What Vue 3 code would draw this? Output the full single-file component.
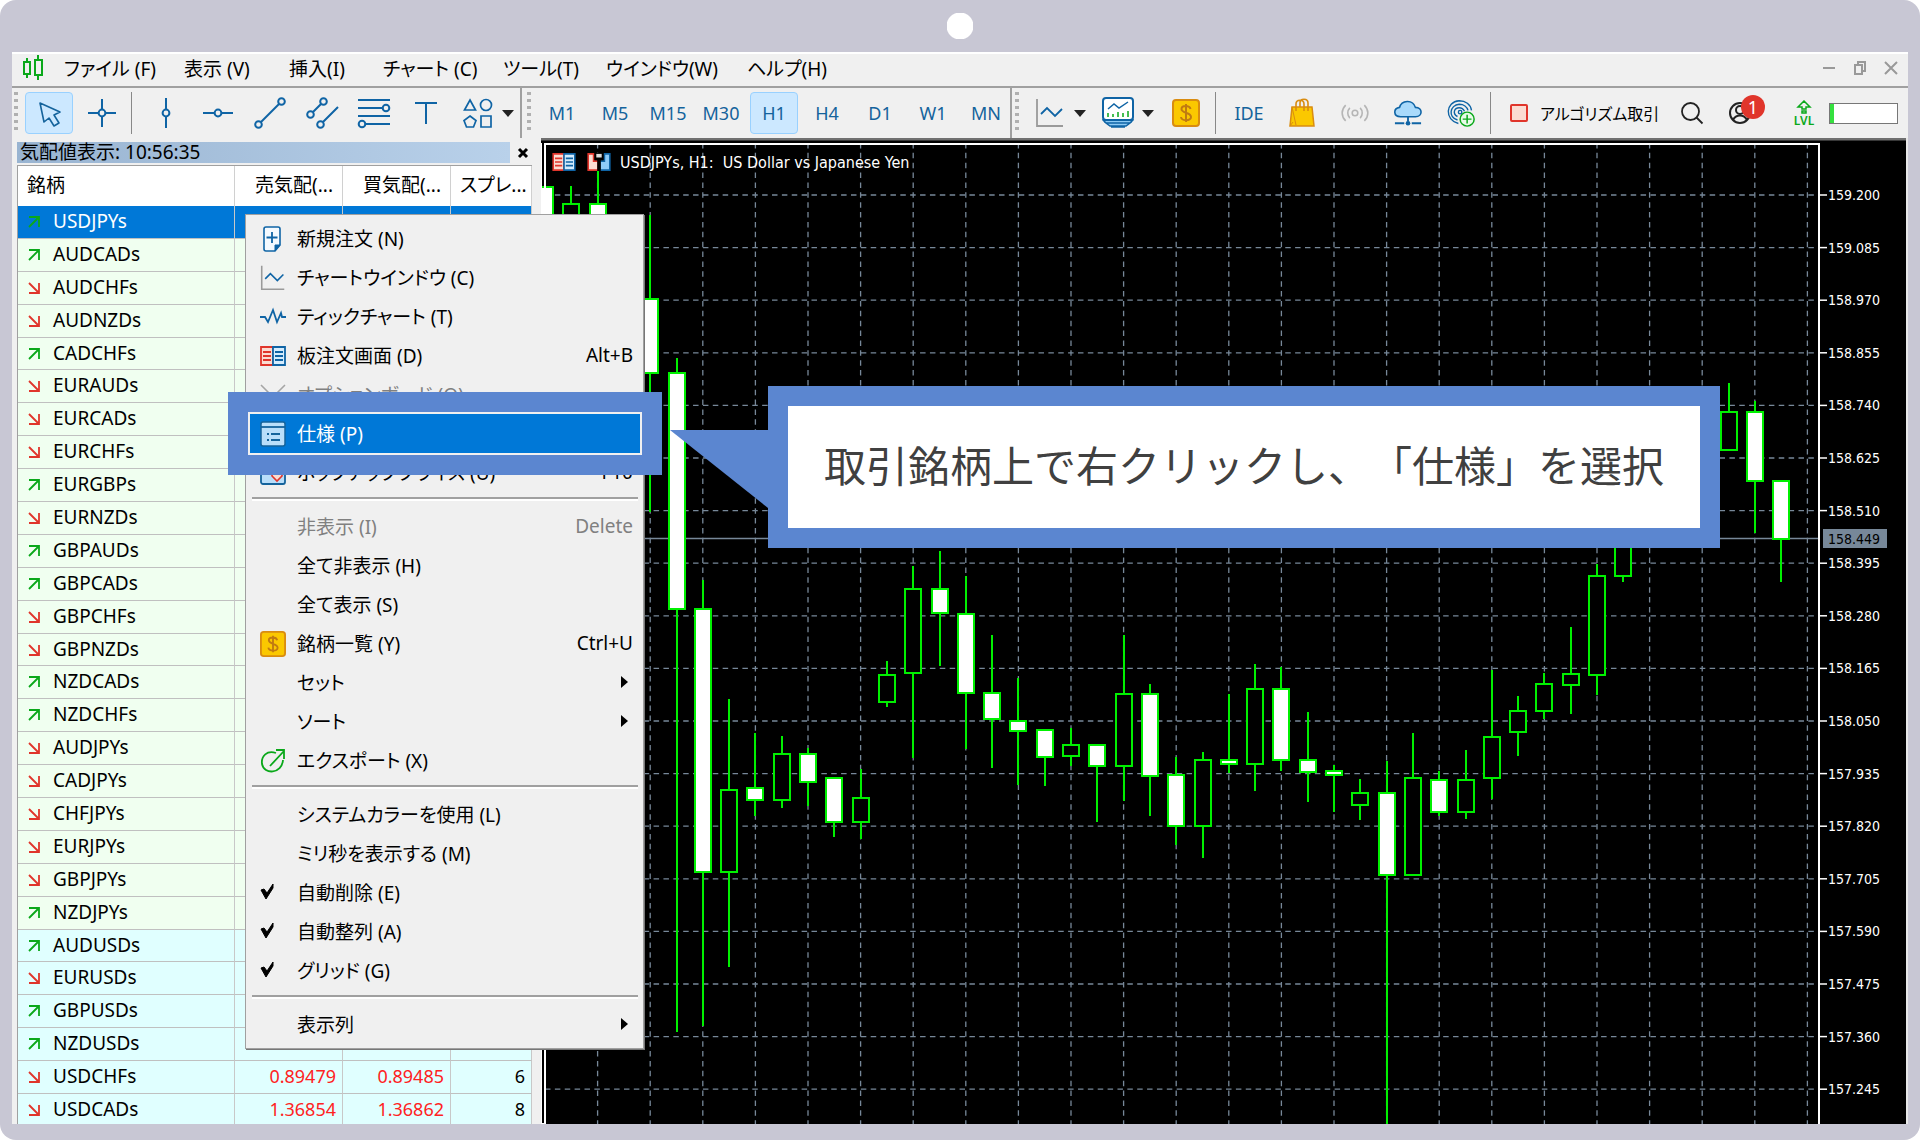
<script setup>
const menus = [
  { label: 'ファイル (F)', width: 120 },
  { label: '表示 (V)', width: 105 },
  { label: '挿入(I)', width: 94 },
  { label: 'チャート (C)', width: 120 },
  { label: 'ツール(T)', width: 103 },
  { label: 'ウインドウ(W)', width: 141 },
  { label: 'ヘルプ(H)', width: 110 }
]

const drawTools = [
  { icon: 'vline', label: '垂直線' },
  { icon: 'hline', label: '水平線' },
  { icon: 'trend', label: 'トレンドライン' },
  { icon: 'channel', label: 'チャネル' },
  { icon: 'fibo', label: 'フィボナッチ' },
  { icon: 'text', label: 'テキスト' },
  { icon: 'shapes', label: '図形' }
]

const frames = ['M1', 'M5', 'M15', 'M30', 'H1', 'H4', 'D1', 'W1', 'MN']

const services = [
  { icon: 'bag', label: 'マーケット' },
  { icon: 'signal', label: 'シグナル' },
  { icon: 'cloud', label: 'VPS' },
  { icon: 'radar', label: 'コピー' }
]

const symbols = [
  ['USDJPYs', 1], ['AUDCADs', 1], ['AUDCHFs', 0], ['AUDNZDs', 0], ['CADCHFs', 1], ['EURAUDs', 0],
  ['EURCADs', 0], ['EURCHFs', 0], ['EURGBPs', 1], ['EURNZDs', 0], ['GBPAUDs', 1], ['GBPCADs', 1],
  ['GBPCHFs', 0], ['GBPNZDs', 0], ['NZDCADs', 1], ['NZDCHFs', 1], ['AUDJPYs', 0], ['CADJPYs', 0],
  ['CHFJPYs', 0], ['EURJPYs', 0], ['GBPJPYs', 0], ['NZDJPYs', 1],
  ['AUDUSDs', 1], ['EURUSDs', 0], ['GBPUSDs', 1],
  ['NZDUSDs', 1, '0.56606', '0.56614', '8'],
  ['USDCHFs', 0, '0.89479', '0.89485', '6'],
  ['USDCADs', 0, '1.36854', '1.36862', '8']
]

const rowClass = (i, up) => ({ selected: i === 0, cyan: i > 21, up: up === 1, down: up === 0 })

const menuItems = [
  { label: '新規注文 (N)', icon: 'order' },
  { label: 'チャートウインドウ (C)', icon: 'chart' },
  { label: 'ティックチャート (T)', icon: 'tick' },
  { label: '板注文画面 (D)', icon: 'depth', key: 'Alt+B' },
  { label: 'オプションボード (O)', icon: 'option', disabled: true },
  { label: '仕様 (P)', icon: 'spec', active: true },
  { label: 'ポップアッププライス (U)', icon: 'popup', key: 'F10' },
  { sep: true },
  { label: '非表示 (I)', key: 'Delete', disabled: true },
  { label: '全て非表示 (H)' },
  { label: '全て表示 (S)' },
  { label: '銘柄一覧 (Y)', icon: 'dollar', key: 'Ctrl+U' },
  { label: 'セット', sub: true },
  { label: 'ソート', sub: true },
  { label: 'エクスポート (X)', icon: 'export' },
  { sep: true },
  { label: 'システムカラーを使用 (L)' },
  { label: 'ミリ秒を表示する (M)' },
  { label: '自動削除 (E)', icon: 'check' },
  { label: '自動整列 (A)', icon: 'check' },
  { label: 'グリッド (G)', icon: 'check' },
  { sep: true },
  { label: '表示列', sub: true }
]

/* chart geometry: grid step, and candles as [slot, filled, high, top, bottom, low] */
const STEP = 52.6
const gridX = Array.from({ length: 24 }, (_, i) => 597.6 + STEP * i)
const levels = Array.from({ length: 18 }, (_, i) => ({
  y: 195 + STEP * i,
  price: (159.2 - 0.115 * i).toFixed(3)
}))

const candles = [
  [-2, 1, 187, 187, 260, 260], [-1, 0, 186, 204, 260, 260], [0, 1, 164, 204, 260, 260],
  [2, 1, 215, 299, 373, 512], [3, 1, 358, 373, 609, 1032], [4, 1, 580, 609, 872, 1026],
  [5, 0, 699, 790, 872, 967], [6, 1, 733, 788, 800, 816], [7, 0, 736, 754, 800, 808],
  [8, 1, 748, 754, 782, 806], [9, 1, 778, 778, 822, 837], [10, 0, 769, 798, 822, 839],
  [11, 0, 661, 675, 702, 707], [12, 0, 566, 589, 673, 758], [13, 1, 551, 589, 613, 666],
  [14, 1, 576, 614, 693, 749], [15, 1, 635, 693, 719, 768], [16, 1, 678, 721, 731, 785],
  [17, 1, 730, 730, 757, 786], [18, 0, 728, 745, 756, 766], [19, 1, 745, 745, 766, 822],
  [20, 0, 635, 694, 766, 801], [21, 1, 684, 694, 776, 816], [22, 1, 757, 775, 826, 845],
  [23, 0, 752, 760, 826, 858], [24, 1, 694, 760, 764, 773], [25, 0, 664, 689, 764, 791],
  [26, 1, 667, 689, 760, 771], [27, 1, 712, 760, 772, 802], [28, 1, 765, 771, 775, 812],
  [29, 0, 779, 793, 805, 820], [30, 1, 761, 793, 875, 1130], [31, 0, 733, 778, 875, 875],
  [32, 1, 771, 780, 812, 816], [33, 0, 750, 780, 812, 819], [34, 0, 670, 737, 778, 799],
  [35, 0, 696, 711, 732, 756], [36, 0, 673, 684, 711, 719], [37, 0, 627, 674, 685, 714],
  [38, 0, 564, 576, 675, 695], [39, 0, 500, 500, 576, 582], [43, 0, 383, 412, 450, 450],
  [44, 1, 401, 412, 481, 533], [45, 1, 481, 481, 539, 582]
].map(([slot, filled, high, top, bottom, low]) => ({
  x: Math.round(597.6 + 26.3 * slot), filled, high, top, bottom, low
}))
</script>

<template>
  <svg class="sprite" aria-hidden="true">
    <symbol id="logo" viewBox="0 0 22 26">
      <g fill="none" stroke="#0aa81a" stroke-width="2"><path d="M5 3v4M5 19v4M16 0v5M16 20v5" /><path d="M2 7h6v12H2zM13 5h7v15h-7z" /></g>
    </symbol>
    <symbol id="pointer" viewBox="0 0 40 40">
      <path d="M11 10l4 19 5-4 5 8 5-3-5-8 6-3z" fill="none" stroke="#14639c" stroke-width="1.6" stroke-linejoin="round" />
    </symbol>
    <symbol id="cross" viewBox="0 0 40 40">
      <g fill="none" stroke="#0f64a5" stroke-width="2"><path d="M20 6v10M20 24v10M6 20h10M24 20h10" /><circle cx="20" cy="20" r="3.4" /></g>
    </symbol>
    <symbol id="vline" viewBox="0 0 40 40">
      <g fill="none" stroke="#0f64a5" stroke-width="2"><path d="M20 5v11M20 24v11" /><circle cx="20" cy="20" r="3.4" /></g>
    </symbol>
    <symbol id="hline" viewBox="0 0 40 40">
      <g fill="none" stroke="#0f64a5" stroke-width="2"><path d="M5 20h11M24 20h11" /><circle cx="20" cy="20" r="3.4" /></g>
    </symbol>
    <symbol id="trend" viewBox="0 0 40 40">
      <g fill="none" stroke="#0f64a5" stroke-width="2"><path d="M11 29L29 11" /><circle cx="8.500" cy="31.500" r="3.3" /><circle cx="31.500" cy="8.500" r="3.3" /></g>
    </symbol>
    <symbol id="channel" viewBox="0 0 40 40">
      <g fill="none" stroke="#0f64a5" stroke-width="2"><path d="M11 19l8-8M21 29l15-15" /><circle cx="8.500" cy="21.500" r="3.3" /><circle cx="21.500" cy="8.500" r="3.3" /><circle cx="18.500" cy="31.500" r="3.3" /></g>
    </symbol>
    <symbol id="fibo" viewBox="0 0 40 40">
      <g fill="none" stroke="#0f64a5" stroke-width="2"><path d="M4 7h32M4 15h24M4 23h32M12 31h24" /><circle cx="32" cy="15" r="3.3" /><circle cx="8" cy="31" r="3.3" /></g>
    </symbol>
    <symbol id="text" viewBox="0 0 40 40">
      <path d="M9 10h22M20 10v21" fill="none" stroke="#0f64a5" stroke-width="2" />
    </symbol>
    <symbol id="shapes" viewBox="0 0 40 40">
      <g fill="none" stroke="#0f64a5" stroke-width="1.700"><path d="M12 7l5.500 10h-11z" /><circle cx="28" cy="12" r="5.500" /><path d="M12 23l6 4.500-2.500 6.500h-7L6 27.500z" /><path d="M23 23h10v11H23z" /></g>
    </symbol>
    <symbol id="caret" viewBox="0 0 12 8"><path d="M0 1h12L6 8z" fill="#222" /></symbol>
    <symbol id="chart" viewBox="0 0 28 30">
      <path d="M1 1v27h26" fill="none" stroke="#9a9a9a" stroke-width="1.800" /><path d="M5 16l6-6 8 8 7-7" fill="none" stroke="#0f64a5" stroke-width="1.800" />
    </symbol>
    <symbol id="indicator" viewBox="0 0 32 32">
      <path d="M1 23h30l-3 3H4zM4 26h24l-4 3H8zM9 30h14" fill="#8dcbf5" stroke="#0f64a5" stroke-width="1.500" />
      <rect x="1" y="1" width="30" height="22" rx="3" fill="#fff" stroke="#0f64a5" stroke-width="2" />
      <path d="M6 12l6-5 5 4 9-6" fill="none" stroke="#0f64a5" stroke-width="1.500" /><path d="M6 20v-4M11 20v-3M16 20v-5M21 20v-4M26 20v-6" stroke="#0aa81a" stroke-width="1.500" />
    </symbol>
    <symbol id="dollar" viewBox="0 0 28 28">
      <rect x="1" y="1" width="26" height="26" rx="3" fill="#fbc800" stroke="#d98c10" stroke-width="2" />
      <path d="M18.500 10c-1-4-9-4-9 0 0 4.500 9.500 3 9.500 8 0 4.500-9.500 4-10 0M14 5v18" fill="none" stroke="#c07a12" stroke-width="2" />
    </symbol>
    <symbol id="bag" viewBox="0 0 28 30">
      <path d="M4 9h20l2 19H2z" fill="#fbc800" stroke="#d98c10" stroke-width="1.500" /><path d="M4 9l4 18M2 28l3-4" stroke="#d98c10" fill="none" />
      <path d="M8 13V6c0-5 8-5 8 0v7M12 9V5c0-5 8-5 8 0v8" fill="none" stroke="#d98c10" stroke-width="1.600" />
    </symbol>
    <symbol id="signal" viewBox="0 0 30 30">
      <g fill="none" stroke="#b5b5b5" stroke-width="1.700"><circle cx="15" cy="15" r="3" /><path d="M9.500 9.500c-3 3-3 8 0 11M20.500 9.500c3 3 3 8 0 11M5 6.500c-5 5-5 12 0 17M25 6.500c5 5 5 12 0 17" /></g>
    </symbol>
    <symbol id="cloud" viewBox="0 0 30 30">
      <path d="M7 19c-8 0-8-9-1-10C8 1 20 0 23 9c8 0 8 10 0 10z" fill="#a9dafb" stroke="#0f64a5" stroke-width="1.700" />
      <path d="M15 19v5M1 26h10M19 26h10" stroke="#0f64a5" stroke-width="2" /><circle cx="15" cy="26" r="2.500" fill="#0f64a5" />
    </symbol>
    <symbol id="radar" viewBox="0 0 32 32">
      <g fill="none" stroke="#0f64a5" stroke-width="1.600"><circle cx="15" cy="15" r="2" /><path d="M13 28C-3 24-2 3 14 2c7 0 13 4 14 11" /><path d="M12 24C1 21 3 7 14 6c5 0 9 3 10 7" /><path d="M12 20c-6-3-4-10 2-10 3 0 5 2 6 4" /></g>
      <circle cx="23" cy="23" r="8" fill="#e8fbe8" stroke="#0aa81a" stroke-width="1.700" /><path d="M23 18v10M18 23h10" stroke="#0aa81a" stroke-width="1.700" />
    </symbol>
    <symbol id="search" viewBox="0 0 24 24">
      <circle cx="10.500" cy="10.500" r="8.500" fill="none" stroke="#222" stroke-width="1.800" /><path d="M16.500 16.500l6 6" stroke="#222" stroke-width="1.800" />
    </symbol>
    <symbol id="user" viewBox="0 0 24 24">
      <g fill="none" stroke="#222" stroke-width="2"><circle cx="12" cy="12" r="10" /><circle cx="12" cy="9" r="4" /><path d="M5 19c3-6 11-6 14 0" /></g>
    </symbol>
    <symbol id="lvl" viewBox="0 0 20 14">
      <path d="M10 1l6 6h-4v2H8V7H4zM8 11h4v2H8z" fill="none" stroke="#0aa81a" stroke-width="1.500" />
    </symbol>
    <symbol id="up" viewBox="0 0 12 12"><path d="M1 1h10v10M11 1L1 11" fill="none" stroke="#0aa81a" stroke-width="1.800" /></symbol>
    <symbol id="down" viewBox="0 0 12 12"><path d="M1 11h10V1M11 11L1 1" fill="none" stroke="#e0352b" stroke-width="1.800" /></symbol>
    <symbol id="order" viewBox="0 0 26 26">
      <path d="M6 1h12c1.500 0 2 .5 2 2v16l-5 6H6c-1.500 0-2-.5-2-2V3c0-1.500.5-2 2-2z" fill="#f4faff" stroke="#0f64a5" stroke-width="1.600" />
      <path d="M20 19l-5 6v-6z" fill="#0f64a5" stroke="#0f64a5" /><path d="M12 6v11M6.500 11.500h11" stroke="#0f64a5" stroke-width="1.800" />
    </symbol>
    <symbol id="tick" viewBox="0 0 26 26">
      <path d="M0 13h5l3 5 5-12 4 12 4-9 1 4h4" fill="none" stroke="#0f64a5" stroke-width="1.800" />
    </symbol>
    <symbol id="depth" viewBox="0 0 26 20">
      <path d="M1 1h12v18H1z" fill="#fbdcd2" stroke="#e0352b" stroke-width="1.800" /><path d="M13 1h12v18H13z" fill="#d5ecfd" stroke="#0f64a5" stroke-width="1.800" />
      <path d="M3 6h8M3 10h8M3 14h8" stroke="#e0352b" stroke-width="1.800" /><path d="M15 6h8M15 10h8M15 14h8" stroke="#0f64a5" stroke-width="1.800" />
    </symbol>
    <symbol id="trade" viewBox="0 0 26 20">
      <path d="M1 1h6v8h5v10H1z" fill="#fbdcd2" stroke="#e0352b" stroke-width="1.800" /><path d="M25 1h-6v8h-5v10h11z" fill="#8ecbf8" stroke="#0f64a5" stroke-width="1.800" />
      <path d="M8 0h10v8h-3v12h-4V8H8z" fill="#000" /><path d="M10 1h6v4h-6z" fill="#ddd" />
    </symbol>
    <symbol id="option" viewBox="0 0 26 26">
      <path d="M1 3l10 10M25 3L13 15L1 25M15 15l10 10" fill="none" stroke="#a5a5a5" stroke-width="1.600" />
    </symbol>
    <symbol id="spec" viewBox="0 0 26 26">
      <rect x="1" y="1" width="24" height="24" rx="2" fill="#b9defa" stroke="#14639c" stroke-width="1.500" /><path d="M1 6h24" stroke="#14639c" stroke-width="1.800" />
      <path d="M7 13h2M11 13h9M7 19h2M11 19h9" stroke="#14639c" stroke-width="1.800" />
    </symbol>
    <symbol id="popup" viewBox="0 0 26 26">
      <rect x="1" y="1" width="24" height="23" rx="2" fill="#b9defa" stroke="#14639c" stroke-width="1.800" /><path d="M12 10h10v6l-5 5-5-5z" fill="#fbdcd2" stroke="#e0352b" stroke-width="1.600" />
    </symbol>
    <symbol id="export" viewBox="0 0 26 26">
      <path d="M16 5C7 2 1 8 2 16c2 11 20 10 21-4M10 18L24 3M16 2h8v9" fill="none" stroke="#0aa81a" stroke-width="1.800" />
    </symbol>
    <symbol id="check" viewBox="0 0 26 26"><path d="M1 10l3-1 3 4 6-9v4L6 19z" fill="#000" stroke="#000" /></symbol>
  </svg>

  <main class="device">
    <div class="camera"></div>
    <div class="screen">
      <nav class="menubar" aria-label="メインメニュー">
        <svg class="logo"><use href="#logo" /></svg>
        <button v-for="m in menus" :key="m.label" :style="{ width: m.width + 'px' }">{{ m.label }}</button>
        <div class="window-controls">
          <button aria-label="最小化"><svg viewBox="0 0 14 14"><path d="M1 7h12" /></svg></button>
          <button aria-label="元に戻す"><svg viewBox="0 0 14 14"><path d="M2 4h7v9H2zM5 4V1h7v9H9" /></svg></button>
          <button aria-label="閉じる"><svg viewBox="0 0 14 14"><path d="M1 1l12 12M13 1L1 13" /></svg></button>
        </div>
      </nav>

      <div class="toolbar">
        <i class="grip"></i>
        <div class="group">
          <button class="tool on" aria-label="カーソル"><svg><use href="#pointer" /></svg></button>
          <button class="tool" aria-label="十字カーソル"><svg><use href="#cross" /></svg></button>
        </div>
        <i class="divider"></i>
        <div class="group tight">
          <button v-for="t in drawTools" :key="t.icon" class="tool" :aria-label="t.label"><svg><use :href="'#' + t.icon" /></svg></button>
        </div>
        <button class="caret" aria-label="図形を選ぶ"><svg><use href="#caret" /></svg></button>
        <i class="edge"></i>
        <i class="grip"></i>
        <div class="group">
          <button v-for="f in frames" :key="f" class="tool" :class="{ on: f === 'H1' }">{{ f }}</button>
        </div>
        <i class="edge flush"></i>
        <i class="grip"></i>
        <button class="tool" aria-label="チャート種類"><svg class="small"><use href="#chart" /></svg></button>
        <button class="caret" aria-label="チャート種類を選ぶ"><svg><use href="#caret" /></svg></button>
        <button class="tool" aria-label="指標"><svg class="mid"><use href="#indicator" /></svg></button>
        <button class="caret" aria-label="指標を選ぶ"><svg><use href="#caret" /></svg></button>
        <button class="tool" aria-label="新規注文"><svg class="small"><use href="#dollar" /></svg></button>
        <i class="divider"></i>
        <div class="group">
          <button class="tool">IDE</button>
          <button v-for="s in services" :key="s.icon" class="tool" :aria-label="s.label"><svg class="small"><use :href="'#' + s.icon" /></svg></button>
        </div>
        <i class="divider"></i>
        <button class="algo"><span class="stop"></span>アルゴリズム取引</button>
        <div class="status">
          <button class="tool" aria-label="検索"><svg class="glass"><use href="#search" /></svg></button>
          <button class="tool account" aria-label="アカウント"><svg class="glass"><use href="#user" /></svg><span class="badge">1</span></button>
          <button class="lvl"><svg><use href="#lvl" /></svg>LVL</button>
          <div class="level" role="meter" aria-label="レベル" aria-valuenow="4" aria-valuemin="0" aria-valuemax="100"></div>
        </div>
      </div>

      <div class="workspace">
        <section class="watch">
          <header>
            <h2>気配値表示: 10:56:35</h2>
            <button aria-label="閉じる"><svg viewBox="0 0 12 12"><path d="M2 2l8 8M10 2l-8 8" /></svg></button>
          </header>
          <table>
            <colgroup><col class="c-name" /><col class="c-price" /><col class="c-price" /><col /></colgroup>
            <thead>
              <tr><th>銘柄</th><th>売気配(...</th><th>買気配(...</th><th>スプレ...</th></tr>
            </thead>
            <tbody>
              <tr v-for="([name, up, bid, ask, spread], i) in symbols" :key="name" :class="rowClass(i, up)">
                <td><svg><use :href="up ? '#up' : '#down'" /></svg>{{ name }}</td>
                <td class="num">{{ bid }}</td>
                <td class="num">{{ ask }}</td>
                <td>{{ spread }}</td>
              </tr>
            </tbody>
          </table>
        </section>

        <svg class="chart" viewBox="541 138 1367 986" role="img" aria-label="USDJPYs H1">
          <rect x="541" y="138" width="1367" height="986" fill="#000" />
          <path d="M541 139h1367" stroke="#707070" stroke-width="3" />
          <g class="grid">
            <path v-for="x in gridX" :key="x" :d="`M${x} 143V1124`" />
            <path v-for="l in levels" :key="l.y" :d="`M545 ${l.y}H1819`" />
          </g>
          <path d="M545 538.500H1819" stroke="#778899" stroke-width="1.500" />
          <g class="candles">
            <g v-for="c in candles" :key="c.x">
              <path :d="`M${c.x} ${c.high}V${c.top}M${c.x} ${c.bottom}V${c.low}`" />
              <rect :x="c.x - 8" :y="c.top" width="16" :height="c.bottom - c.top" :fill="c.filled ? '#fff' : '#000'" />
            </g>
          </g>
          <path d="M541 143v981h4V144H1819V1124" class="frame" />
          <path d="M1907 138V1124" stroke="#e8e8e8" stroke-width="2" />
          <use href="#depth" x="552" y="153" width="24" height="18" />
          <use href="#trade" x="587" y="153" width="24" height="18" />
          <text x="620" y="168" class="caption">USDJPYs, H1:&nbsp; US Dollar vs Japanese Yen</text>
          <g v-for="l in levels" :key="l.price">
            <path :d="`M1819 ${l.y}h8`" stroke="#fff" stroke-width="1.500" />
            <text x="1828" :y="l.y + 5">{{ l.price }}</text>
          </g>
          <rect x="1823" y="529" width="64" height="19" fill="#778899" />
          <text x="1828" y="544" class="current">158.449</text>
        </svg>

        <ul class="context" role="menu">
          <li v-for="(m, i) in menuItems" :key="i" :class="{ sep: m.sep, active: m.active }">
            <button v-if="!m.sep" role="menuitem" :disabled="m.disabled">
              <span class="slot"><svg v-if="m.icon"><use :href="'#' + m.icon" /></svg></span>
              <span class="label">{{ m.label }}</span>
              <span v-if="m.key" class="key">{{ m.key }}</span>
              <svg v-if="m.sub" class="sub" viewBox="0 0 7 12"><path d="M0 0l7 6-7 6z" /></svg>
            </button>
          </li>
        </ul>

        <aside class="callout">
          <svg class="tail" viewBox="0 0 98 78"><path d="M0 0h98v78z" fill="#5b86d0" /></svg>
          <p>取引銘柄上で右クリックし、「仕様」を選択</p>
        </aside>
      </div>
    </div>
  </main>
</template>

<style>
body {
  background: #fff;
}
</style>

<style scoped>
.sprite {
  position: absolute;
  width: 0;
  height: 0;
}

.device {
  box-sizing: border-box;
  min-height: 100vh;
  padding: 0 12px 16px;
  border-radius: 16px;
  background: #c8c7d4;
  color: #000;
  font-family: "Noto Sans", "Noto Sans CJK JP", sans-serif;
  font-size: 19px;
  font-feature-settings: "palt";
}

.camera {
  width: 26px;
  height: 26px;
  margin: 0 auto;
  border: solid #c8c7d4;
  border-width: 13px 0;
  background: radial-gradient(circle, #fff 13px, transparent 14px);
}

button {
  display: flex;
  align-items: center;
  margin: 0;
  padding: 0;
  border: 0;
  background: none;
  color: inherit;
  font: inherit;
  font-feature-settings: inherit;
  white-space: nowrap;
}

.screen {
  overflow: hidden;
  background: #f0f0f0;
}

.menubar {
  box-sizing: border-box;
  display: flex;
  align-items: center;
  height: 36px;
  padding: 0 10px 4px;
  border-top: 2px solid #fff;
  border-bottom: 2px solid #a0a0a0;
}

.logo {
  width: 22px;
  height: 26px;
  margin-right: 20px;
}

.window-controls {
  display: flex;
  gap: 17px;
  margin-left: auto;
}

.window-controls svg {
  width: 14px;
  height: 14px;
  fill: none;
  stroke: #999;
  stroke-width: 2;
}

.toolbar {
  display: flex;
  align-items: center;
  height: 50px;
  color: #14639c;
  font-size: 18px;
}

.grip {
  width: 4px;
  height: 42px;
  margin: 0 7px 0 2px;
  background: repeating-linear-gradient(#b0b0b0 0 3px, transparent 3px 7px);
}

.edge {
  width: 2px;
  height: 50px;
  margin-left: 6px;
  margin-right: 3px;
  background: #a0a0a0;
}

.edge.flush {
  margin-left: 0;
  margin-right: 1px;
}

.divider {
  width: 1px;
  height: 42px;
  margin: 0 9px 0 5px;
  background: #888;
}

.group {
  display: flex;
  gap: 5px;
}

.group.tight {
  gap: 4px;
  margin-left: 1px;
}

.tool {
  box-sizing: border-box;
  justify-content: center;
  width: 48px;
  height: 42px;
  border: 1px solid transparent;
  border-radius: 4px;
}

.tool.on {
  border-color: #99d1ff;
  background: #cce8ff;
}

.tool svg {
  width: 40px;
  height: 40px;
}

.tool .small {
  width: 28px;
  height: 30px;
}

.tool .mid {
  width: 32px;
  height: 32px;
}

.tool .glass {
  width: 24px;
  height: 24px;
}

.caret {
  width: 12px;
  margin-right: 8px;
}

.group + .caret {
  margin-right: 0;
}

.caret svg {
  width: 12px;
  height: 8px;
}

.algo {
  gap: 12px;
  margin-left: 10px;
  color: #000;
  font-size: 16px;
}

.stop {
  box-sizing: border-box;
  width: 18px;
  height: 18px;
  border: 2px solid #e0352b;
  border-radius: 2px;
  background: #fbdcd2;
}

.status {
  display: flex;
  align-items: center;
  margin-left: auto;
  margin-right: 10px;
}

.account {
  position: relative;
}

.badge {
  position: absolute;
  top: 2px;
  right: -2px;
  width: 24px;
  height: 24px;
  border-radius: 50%;
  background: #e0352b;
  color: #fff;
  font-size: 18px;
  line-height: 24px;
  text-align: center;
}

.lvl {
  flex-direction: column;
  width: 48px;
  margin: 0 1px 0 16px;
  color: #0aa81a;
  font-size: 12px;
  font-weight: 600;
  line-height: 13px;
}

.lvl svg {
  width: 20px;
  height: 14px;
}

.level {
  box-sizing: border-box;
  width: 69px;
  height: 21px;
  border: 1px solid #777;
  background: linear-gradient(90deg, #35e03f 4px, #fff 4px);
}

.workspace {
  position: relative;
  display: flex;
  align-items: stretch;
}

.watch {
  flex: none;
  box-sizing: border-box;
  width: 529px;
  height: 0;
  min-height: 100%;
  padding: 4px 9px 0 5px;
}

.watch header {
  display: flex;
  height: 23px;
}

.watch h2 {
  flex: 1;
  height: 21px;
  margin: 0;
  padding-left: 3px;
  background: linear-gradient(90deg, #99b4d1, #b9d1ea);
  font-size: 19px;
  font-weight: 400;
  line-height: 20px;
}

.watch header button {
  justify-content: center;
  width: 26px;
  height: 21px;
}

.watch h2 + button {
  margin-right: -4px;
}

.watch header svg {
  width: 12px;
  height: 12px;
  stroke: #000;
  stroke-width: 3;
}

.watch table {
  width: 100%;
  height: 962px;
  border-top: 1px solid #a0a0a0;
  border-left: 1px solid #a0a0a0;
  border-spacing: 0;
  table-layout: fixed;
  background: #fff;
  font-size: 19px;
  line-height: 20px;
}

.c-name {
  width: 217px;
}

.c-price {
  width: 108px;
}

th,
td {
  padding: 0 6px 2px;
  border-right: 1px solid #d0d0d0;
  text-align: right;
  white-space: nowrap;
}

th {
  height: 38px;
  padding: 0 9px 2px;
  font-weight: 400;
}

th:first-child,
td:first-child {
  text-align: left;
}

td {
  border-right-color: #c8c8c8;
  border-bottom: 1px solid #c0c0c0;
  background: #f0fff0;
}

td:first-child {
  padding-left: 10px;
}

td:not(:first-child) {
  font-size: 18px;
}

td svg {
  width: 12px;
  height: 12px;
  margin-right: 13px;
}

.cyan td {
  background: #e0ffff;
}

.selected td {
  background: #0078d7;
  color: #fff;
}

.down .num {
  color: #f22;
}

.up .num {
  color: #22f;
}

.chart {
  flex: 1;
  min-width: 0;
  display: block;
}

.chart text {
  fill: #fff;
  font-family: "DejaVu Sans Condensed", "DejaVu Sans", sans-serif;
  font-size: 14px;
}

.chart .caption {
  font-size: 16px;
}

.chart .current {
  fill: #000;
}

.grid path {
  fill: none;
  stroke: #778899;
  stroke-width: 1.3;
  stroke-dasharray: 5.5 4.37;
}

.candles path,
.candles rect {
  stroke: #00f000;
  stroke-width: 2;
}

.frame {
  fill: none;
  stroke: #fff;
  stroke-width: 2;
}

.context {
  position: absolute;
  top: 76px;
  left: 233px;
  box-sizing: border-box;
  width: 399px;
  margin: 0;
  padding: 4px 3px 4px 4px;
  border: 1px solid #a0a0a0;
  box-shadow: 1px 1px 0 #777;
  background: #f0f0f0;
  list-style: none;
}

.context li {
  height: 39px;
}

.context .sep {
  height: 9px;
  margin: 0 2px;
  padding-top: 6px;
  background: linear-gradient(#a0a0a0 0 2px, #fff 2px 4px, transparent 4px) 0 5px / 100% 4px no-repeat;
}

.context button {
  width: 100%;
  height: 39px;
  padding: 0 7px 0 10px;
}

.context button:disabled {
  color: #808080;
}

.slot {
  width: 26px;
  height: 26px;
  margin-right: 11px;
}

.slot svg {
  width: 26px;
  height: 26px;
}

.label,
.key {
  padding-bottom: 2px;
}

.label {
  flex: 1;
  text-align: left;
}

.sub {
  width: 7px;
  height: 12px;
  margin: 0 5px 2px 0;
}

.context .active {
  position: relative;
  background: #0078d7;
  box-shadow: 0 0 0 2px #f0f0f0, 0 0 0 22px #5b86d0;
  color: #fff;
}

.callout {
  position: absolute;
  top: 248px;
  left: 756px;
  box-sizing: border-box;
  width: 952px;
  border: 20px solid #5b86d0;
  background: #fff;
}

.callout p {
  display: flex;
  justify-content: center;
  margin: 0;
  padding-bottom: 6px;
  color: #404040;
  font-family: "Noto Sans CJK JP", sans-serif;
  font-feature-settings: normal;
  font-size: 42px;
  font-weight: 400;
  line-height: 116px;
  text-spacing-trim: space-all;
  white-space: nowrap;
}

.tail {
  position: absolute;
  top: 24px;
  left: -118px;
  width: 98px;
  height: 78px;
}
</style>
